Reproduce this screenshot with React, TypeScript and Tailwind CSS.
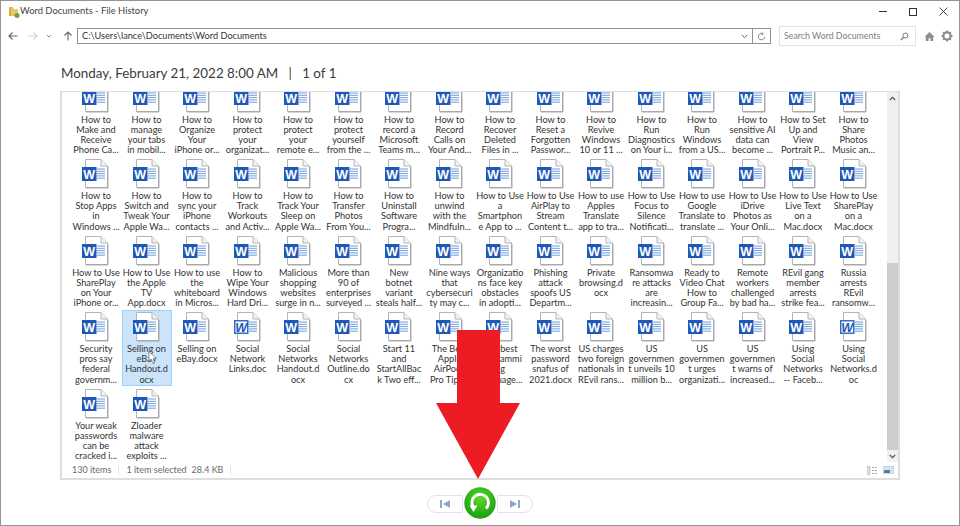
import React from "react";

type Item = { l: string[]; old?: boolean; sel?: boolean };
const rows: string[] = [
  "How to|Make and|Receive|Phone Ca...", "How to|manage|your tabs|in mobil...", "How to|Organize|Your|iPhone or...", "How to|protect|your|organizat...", "How to|protect|your|remote e...", "How to|protect|yourself|from the ...", "How to|record a|Microsoft|Teams m...", "How to|Record|Calls on|Your And...", "How to|Recover|Deleted|Files in ...", "How to|Reset a|Forgotten|Passwor...", "How to|Revive|Windows|10 or 11 ...", "How to|Run|Diagnostics|on Your i...", "How to|Run|Windows|from a US...", "How to|sensitive AI|data can|become ...", "How to Set|Up and|View|Portrait P...", "How to|Share|Photos|Music an...",
  "How to|Stop Apps|in|Windows ...", "How to|Switch and|Tweak Your|Apple Wa...", "How to|sync your|iPhone|contacts ...", "How to|Track|Workouts|and Activ...", "How to|Track Your|Sleep on|Apple Wa...", "How to|Transfer|Photos|From You...", "How to|Uninstall|Software|Progra...", "How to|unwind|with the|Mindfuln...", "How to Use|a|Smartphon|e App to ...", "How to Use|AirPlay to|Stream|Content t...", "How to use|Apples|Translate|app to tra...", "How to Use|Focus to|Silence|Notificati...", "How to use|Google|Translate to|translate ...", "How to Use|iDrive|Photos as|Your Onli...", "How to Use|Live Text|on a|Mac.docx", "How to Use|SharePlay|on a|Mac.docx",
  "How to Use|SharePlay|on Your|iPhone or...", "How to Use|the Apple|TV|App.docx", "How to use|the|whiteboard|in Micros...", "How to|Wipe Your|Windows|Hard Dri...", "Malicious|shopping|websites|surge in n...", "More than|90 of|enterprises|surveyed ...", "New|botnet|variant|steals half...", "Nine ways|that|cybersecuri|ty may c...", "Organizatio|ns face key|obstacles|in adopti...", "Phishing|attack|spoofs US|Departm...", "Private|browsing.d|ocx", "Ransomwa|re attacks|are|increasin...", "Ready to|Video Chat|How to|Group Fa...", "Remote|workers|challenged|by bad ha...", "REvil gang|member|arrests|strike fea...", "Russia|arrests|REvil|ransomw...",
  "Security|pros say|federal|governm...", "Selling on|eBay|Handout.d|ocx", "Selling on|eBay.docx", "Social|Network|Links.doc", "Social|Networks|Handout.d|ocx", "Social|Networks|Outline.do|cx", "Start 11|and|StartAllBac|k Two eff...", "The Best|Apple|AirPods|Pro Tips...", "The best|Programmi|ng|Language...", "The worst|password|snafus of|2021.docx", "US charges|two foreign|nationals in|REvil rans...", "US|governmen|t unveils 10|million b...", "US|governmen|t urges|organizati...", "US|governmen|t warns of|increased...", "Using|Social|Networks|-- Faceb...", "Using|Social|Networks.d|oc",
  "Your weak|passwords|can be|cracked i...", "Zloader|malware|attack|exploits ...",
];
const items: Item[] = rows.map((r, i) => ({ l: r.split("|"), old: i === 51 || i === 63, sel: i === 49 }));

function DocIcon({ old }: { old?: boolean }) {
  return (
    <svg width="28" height="30" viewBox="0 0 28 30" className="block">
      <path d="M4.5.5H20L26.5 7V28.5H4.5Z" fill="#fff" stroke="#b4b4b4" />
      <path d="M20 .5V7H26.5" fill="#f2f2f2" stroke="#b4b4b4" />
      <path d="M5 29H27V8" fill="none" stroke="#9a9a9a" strokeWidth="0.8" />
      <path d="M16 10h8M16 12.3h8M16 14.6h8M16 16.9h8M16 19.2h8" stroke={old ? "#5b9bd5" : "#6f9ede"} strokeWidth="1" />
      <rect x="1" y="8" width="14.5" height="14" fill={old ? "#2f6fc4" : "#1f58b8"} />
      {old && <rect x="2.5" y="9.5" width="11.5" height="11" fill="#fff" />}
      <text x="8.2" y="19.6" textAnchor="middle" fontSize="12.5" fontWeight="700" fontStyle={old ? "italic" : "normal"} fontFamily="'Liberation Sans', sans-serif" fill={old ? "#1f58b8" : "#fff"}>W</text>
    </svg>
  );
}

function Cell({ it }: { it: Item }) {
  return (
    <div className={`w-[50px] h-[76px] flex flex-col items-center border ${it.sel ? "bg-[#cce4fa] border-[#99d1ff]" : "border-transparent"}`}>
      <div className="mt-[1px] h-[30px] -ml-[2px]"><DocIcon old={it.old} /></div>
      <div className="mt-[2px] w-full text-center text-[9.2px] leading-[10.2px] text-[#333] whitespace-nowrap flex flex-col items-center">
        {it.l.map((t, i) => <span key={i} className="block">{t}</span>)}
      </div>
    </div>
  );
}

export default function App() {
  return (
    <div className="relative w-[960px] h-[526px] bg-white border border-[#949494] flex flex-col overflow-hidden font-['Lato','Roboto',sans-serif] text-[#333]">
      {/* title bar */}
      <div className="h-[21px] flex items-center shrink-0">
        <svg width="12" height="12" viewBox="0 0 12 12" className="ml-[7px]">
          <path d="M1 1h4l1 2h4v7H1Z" fill="#e8c76a" />
          <path d="M1 1h2v9H1Z" fill="#d9a93c" />
          <circle cx="9" cy="9.5" r="2.5" fill="#5aa845" />
        </svg>
        <span className="ml-[0px] text-[9.4px] text-[#444]">Word Documents - File History</span>
        <div className="ml-auto flex items-center">
          <div className="w-[30px] flex justify-center"><div className="w-[8px] h-[1px] bg-[#333]" /></div>
          <div className="w-[30px] flex justify-center"><div className="w-[8px] h-[8px] border border-[#333]" /></div>
          <div className="w-[30px] flex justify-center mr-[1px]">
            <svg width="9" height="9" viewBox="0 0 9 9"><path d="M.5.5l8 8M8.5.5l-8 8" stroke="#333" strokeWidth="0.9" /></svg>
          </div>
        </div>
      </div>

      {/* navigation */}
      <div className="h-[24px] flex items-center shrink-0 mt-[2px]">
        <svg width="10" height="10" viewBox="0 0 10 10" className="ml-[7px]"><path d="M9.5 5H1M4.5 1.5 1 5l3.5 3.5" fill="none" stroke="#666" strokeWidth="1.1" /></svg>
        <svg width="10" height="10" viewBox="0 0 10 10" className="ml-[10px]"><path d="M.5 5H9M5.5 1.5 9 5 5.5 8.5" fill="none" stroke="#cfcfcf" strokeWidth="1.1" /></svg>
        <svg width="6" height="6" viewBox="0 0 6 6" className="ml-[8px]"><path d="M1 2l2 2 2-2" fill="none" stroke="#888" /></svg>
        <svg width="10" height="10" viewBox="0 0 10 10" className="ml-[11px]"><path d="M5 9.5V1M1.5 4.5 5 1l3.5 3.5" fill="none" stroke="#666" strokeWidth="1.1" /></svg>
        <div className="ml-[4px] w-[694px] h-[16px] border border-[#8f8f8f] flex items-center">
          <span className="flex-1 pl-[4px] text-[9.2px] text-[#333]">C:\Users\lance\Documents\Word Documents</span>
          <svg width="7" height="5" viewBox="0 0 7 5" className="mr-[4px]"><path d="M.7.8 3.5 3.7 6.3.8" fill="none" stroke="#666" /></svg>
          <div className="w-[18px] h-full border-l border-[#8f8f8f] flex items-center justify-center">
            <svg width="9" height="9" viewBox="0 0 10 10"><path d="M8.5 5A3.5 3.5 0 1 1 6.5 2M5 .3 7 2 5 3.6" fill="none" stroke="#777" /></svg>
          </div>
        </div>
        <div className="ml-[8px] w-[137px] h-[20px] border border-[#e4e4e4] flex items-center">
          <span className="flex-1 pl-[4px] text-[8.8px] text-[#808080]">Search Word Documents</span>
          <svg width="9" height="9" viewBox="0 0 10 10" className="mr-[6px]"><circle cx="6" cy="4" r="2.8" fill="none" stroke="#666" /><path d="M4 6 1 9" stroke="#666" strokeWidth="1.4" /></svg>
        </div>
        <svg width="11" height="11" viewBox="0 0 12 12" className="ml-[8px]"><path d="M6 1 .5 6.5H2V11h3V8h2v3h3V6.5h1.5Z" fill="#8a8f94" /></svg>
        <svg width="12" height="12" viewBox="0 0 12 12" className="ml-[6px]"><circle cx="6" cy="6" r="3.6" fill="none" stroke="#8a8f94" strokeWidth="2.2" /><path d="M6 .5v2M6 9.5v2M.5 6h2M9.5 6h2M2.1 2.1l1.4 1.4M8.5 8.5l1.4 1.4M2.1 9.9l1.4-1.4M8.5 3.5l1.4-1.4" stroke="#8a8f94" strokeWidth="1.8" /></svg>
      </div>

      {/* date */}
      <div className="h-[43px] shrink-0 flex items-end pb-[9px] pl-[60px] text-[13.4px] leading-[18px] text-[#3c3c3c] whitespace-pre">
        Monday, February 21, 2022 8:00 AM{"   |   "}1 of 1
      </div>

      {/* panel */}
      <div className="ml-[59px] w-[840px] h-[389px] shrink-0 border-2 border-t border-[#dedede] flex flex-col">
        <div className="flex-1 min-h-0 flex">
          <div className="flex-1 min-w-0 overflow-hidden pl-[9px]">
            <div className="-mt-[11.5px] grid grid-cols-[repeat(16,50.5px)] auto-rows-[76.5px]">
              {items.map((it, i) => <Cell key={i} it={it} />)}
            </div>
          </div>
          <div className="w-[11px] shrink-0 bg-[#f0f0f0] flex flex-col">
            <div className="h-[12px] flex items-center justify-center shrink-0">
              <svg width="7" height="5" viewBox="0 0 7 5"><path d="M.8 4 3.5 1.3 6.2 4" fill="none" stroke="#555" strokeWidth="1.2" /></svg>
            </div>
            <div className="mt-[159px] flex-1 bg-[#cdcdcd]" />
            <div className="h-[12px] flex items-center justify-center shrink-0">
              <svg width="7" height="5" viewBox="0 0 7 5"><path d="M.8 1 3.5 3.7 6.2 1" fill="none" stroke="#555" strokeWidth="1.2" /></svg>
            </div>
          </div>
        </div>
        <div className="h-[16px] shrink-0 flex items-center pl-[10px] text-[9px] text-[#6a6a6a]">
          <span>130 items</span>
          <span className="mx-[7px] h-[9px] w-px bg-[#e4e4e4]" />
          <span>1 item selected</span>
          <span className="ml-[5px]">28.4 KB</span>
          <span className="ml-[7px] h-[9px] w-px bg-[#e4e4e4]" />
          <svg width="11" height="9" viewBox="0 0 11 9" className="ml-auto"><rect x="0" y="0" width="3" height="9" fill="#e8d8d8" stroke="#b9a9a9" strokeWidth=".5" /><path d="M5 1.5h6M5 4.5h6M5 7.5h6" stroke="#aaa" strokeDasharray="2 1" /></svg>
          <svg width="11" height="8" viewBox="0 0 11 8" className="ml-[5px] mr-[4px]"><rect width="11" height="8" fill="#d5e3ef" stroke="#aaa" strokeWidth=".5" /><rect x="1" y="4" width="6" height="3" fill="#5a7d98" /></svg>
        </div>
      </div>

      {/* playback */}
      <div className="flex-1 relative flex items-center justify-center pt-[2px]">
        <div className="flex items-center">
          <div className="w-[36px] h-[18px] rounded-l-full border border-[#dfe4ea] flex items-center justify-center">
            <svg width="10" height="8" viewBox="0 0 10 8"><path d="M0 0h2v8H0ZM10 0v8L3 4Z" fill="#8ea6c4" /></svg>
          </div>
          <div className="w-[34px]" />
          <div className="w-[36px] h-[18px] rounded-r-full border border-[#dfe4ea] flex items-center justify-center">
            <svg width="10" height="8" viewBox="0 0 10 8"><path d="M0 0v8l7-4ZM8 0h2v8H8Z" fill="#8ea6c4" /></svg>
          </div>
        </div>
      </div>

      {/* overlays */}
      <svg width="36" height="36" viewBox="0 0 36 36" className="absolute left-[461px] top-[484px]">
        <defs>
          <radialGradient id="g" cx="50%" cy="35%" r="70%"><stop offset="0" stopColor="#5fd62c" /><stop offset="1" stopColor="#139a0e" /></radialGradient>
        </defs>
        <circle cx="18" cy="18" r="17.5" fill="#fff" />
        <circle cx="18" cy="18" r="15.7" fill="url(#g)" />
        <path d="M11.5 22.5A8.3 8.3 0 1 1 24 23.5" fill="none" stroke="#fff" strokeWidth="2.8" />
        <path d="M7.5 20.5 15.5 20.5 11.5 27Z" fill="#fff" />
      </svg>
      <svg width="84" height="150" viewBox="0 0 84 150" className="absolute left-[435px] top-[329px]">
        <path d="M21 0H64V73H84L42 149 0 73H21Z" fill="#ed1c24" />
      </svg>
      <svg width="9" height="13" viewBox="0 0 9 13" className="absolute left-[147px] top-[350px]">
        <path d="M1 .5V10L3.2 8 5 12l1.6-.8L5 7.5h3Z" fill="#fff" stroke="#777" strokeWidth=".7" />
      </svg>
    </div>
  );
}
